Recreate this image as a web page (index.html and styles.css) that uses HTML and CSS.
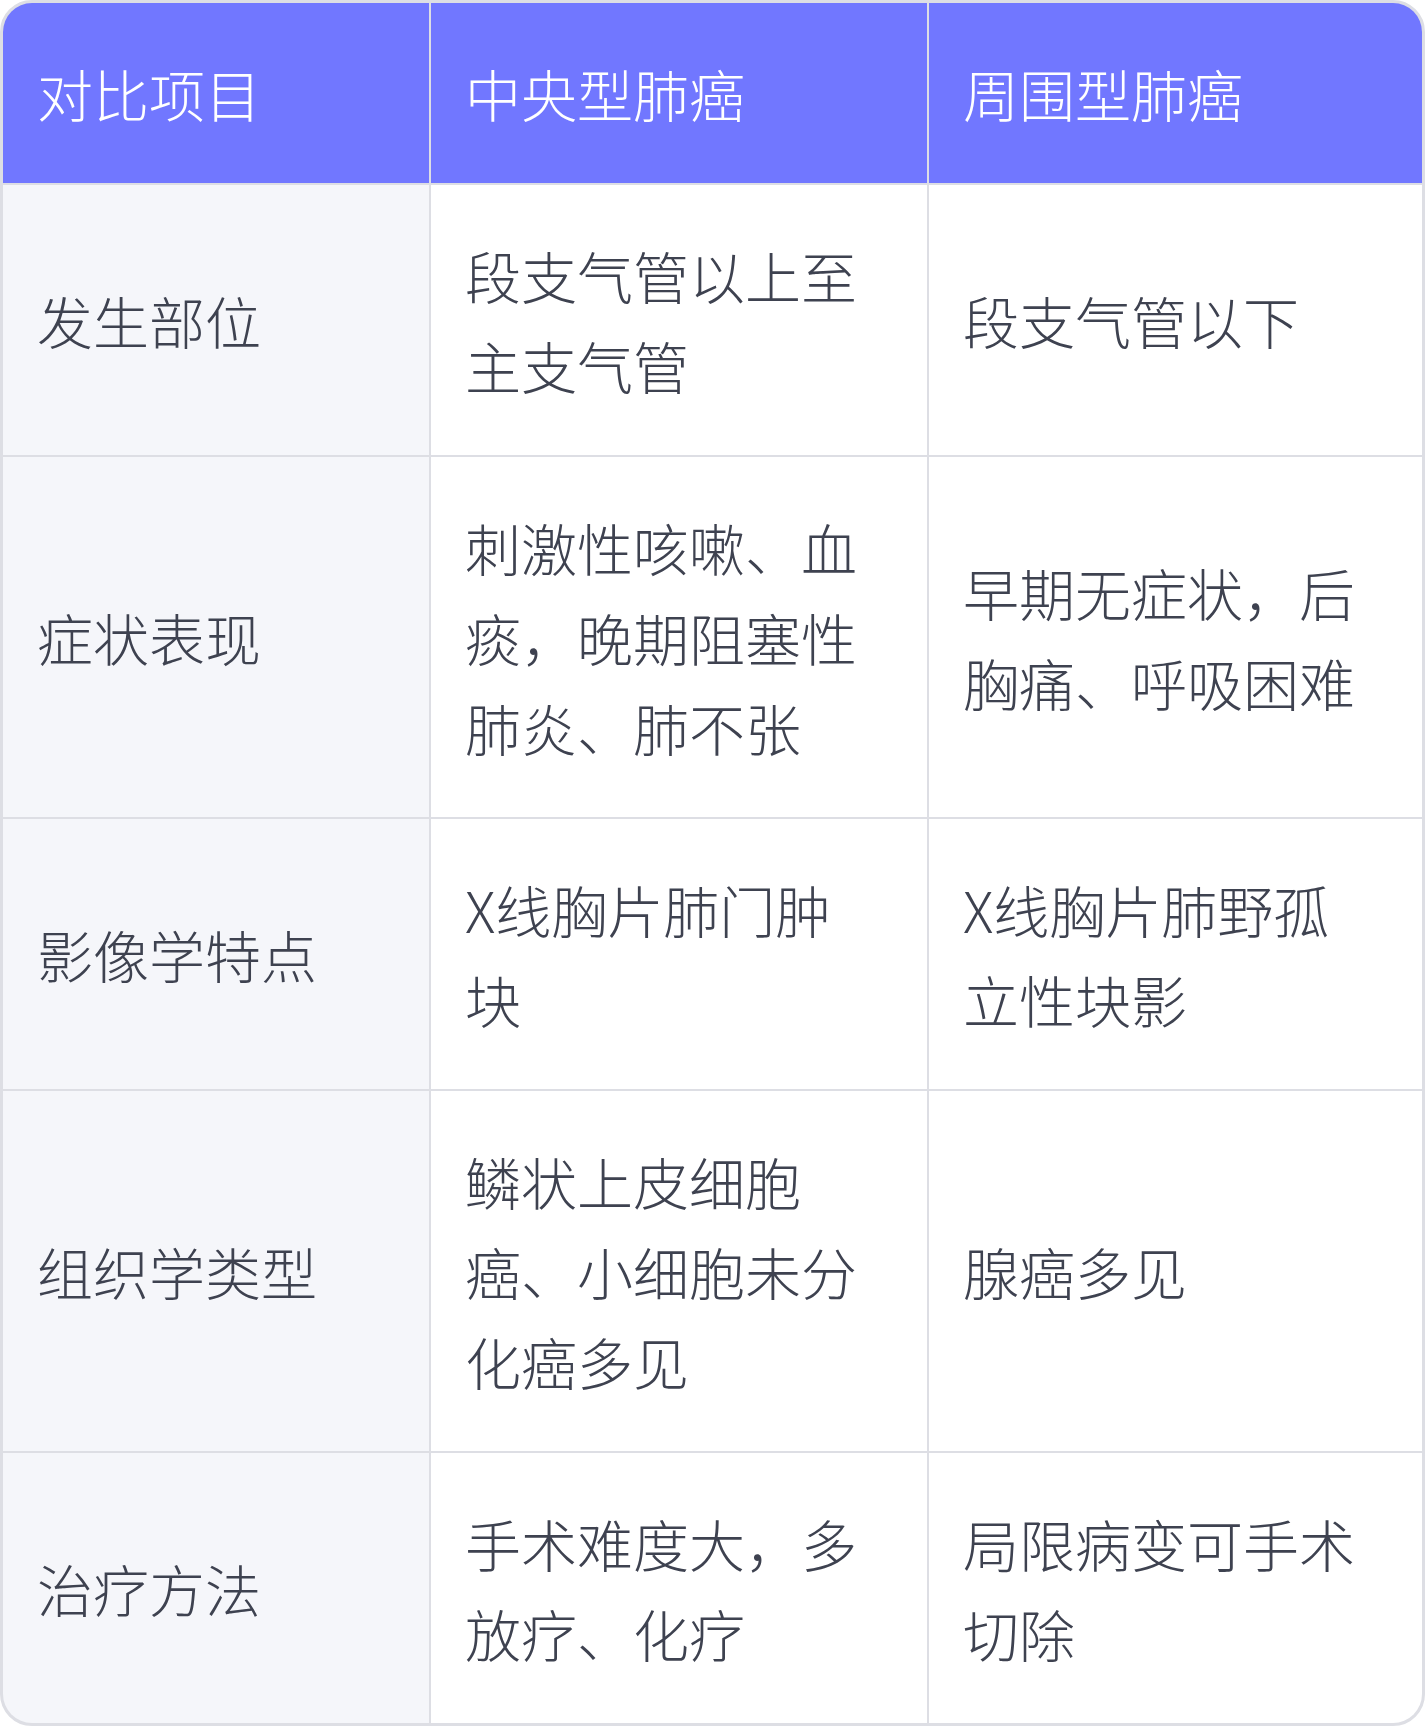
FILE: index.html
```html
<!DOCTYPE html>
<html lang="zh-CN">
<head>
<meta charset="utf-8">
<title>中央型肺癌与周围型肺癌对比</title>
<link rel="stylesheet" href="styles.css">
</head>
<body>
<div class="table">
  <div class="cell head">对比项目</div>
  <div class="cell head">中央型肺癌</div>
  <div class="cell head">周围型肺癌</div>

  <div class="cell label">发生部位</div>
  <div class="cell">段支气管以上至主支气管</div>
  <div class="cell">段支气管以下</div>

  <div class="cell label">症状表现</div>
  <div class="cell">刺激性咳嗽、血痰，晚期阻塞性肺炎、肺不张</div>
  <div class="cell">早期无症状，后胸痛、呼吸困难</div>

  <div class="cell label">影像学特点</div>
  <div class="cell">X线胸片肺门肿块</div>
  <div class="cell">X线胸片肺野孤立性块影</div>

  <div class="cell label">组织学类型</div>
  <div class="cell">鳞状上皮细胞癌、小细胞未分化癌多见</div>
  <div class="cell">腺癌多见</div>

  <div class="cell label">治疗方法</div>
  <div class="cell">手术难度大，多放疗、化疗</div>
  <div class="cell">局限病变可手术切除</div>
</div>
</body>
</html>
```
FILE: styles.css
```css
html, body {
  margin: 0;
  padding: 0;
  background: #ffffff;
}
.table {
  display: grid;
  grid-template-columns: 426px 496px 1fr;
  gap: 2px;
  background: #dddee4;
  border: 3px solid #dddee4;
  border-radius: 32px;
  overflow: hidden;
  width: 1425px;
  box-sizing: border-box;
  font-family: "Noto Sans CJK SC", "Noto Sans", sans-serif;
  font-weight: 300;
  font-size: 56px;
  line-height: 90px;
  color: #3e4250;
}
.cell {
  background: #ffffff;
  padding: 45px 57px 45px 34px;
  display: flex;
  align-items: center;
  min-height: 180px;
  box-sizing: border-box;
  word-break: break-all;
}
.cell.head {
  background: #7177ff;
  color: #ffffff;
}
.cell.label {
  background: #f5f6fa;
}
```
